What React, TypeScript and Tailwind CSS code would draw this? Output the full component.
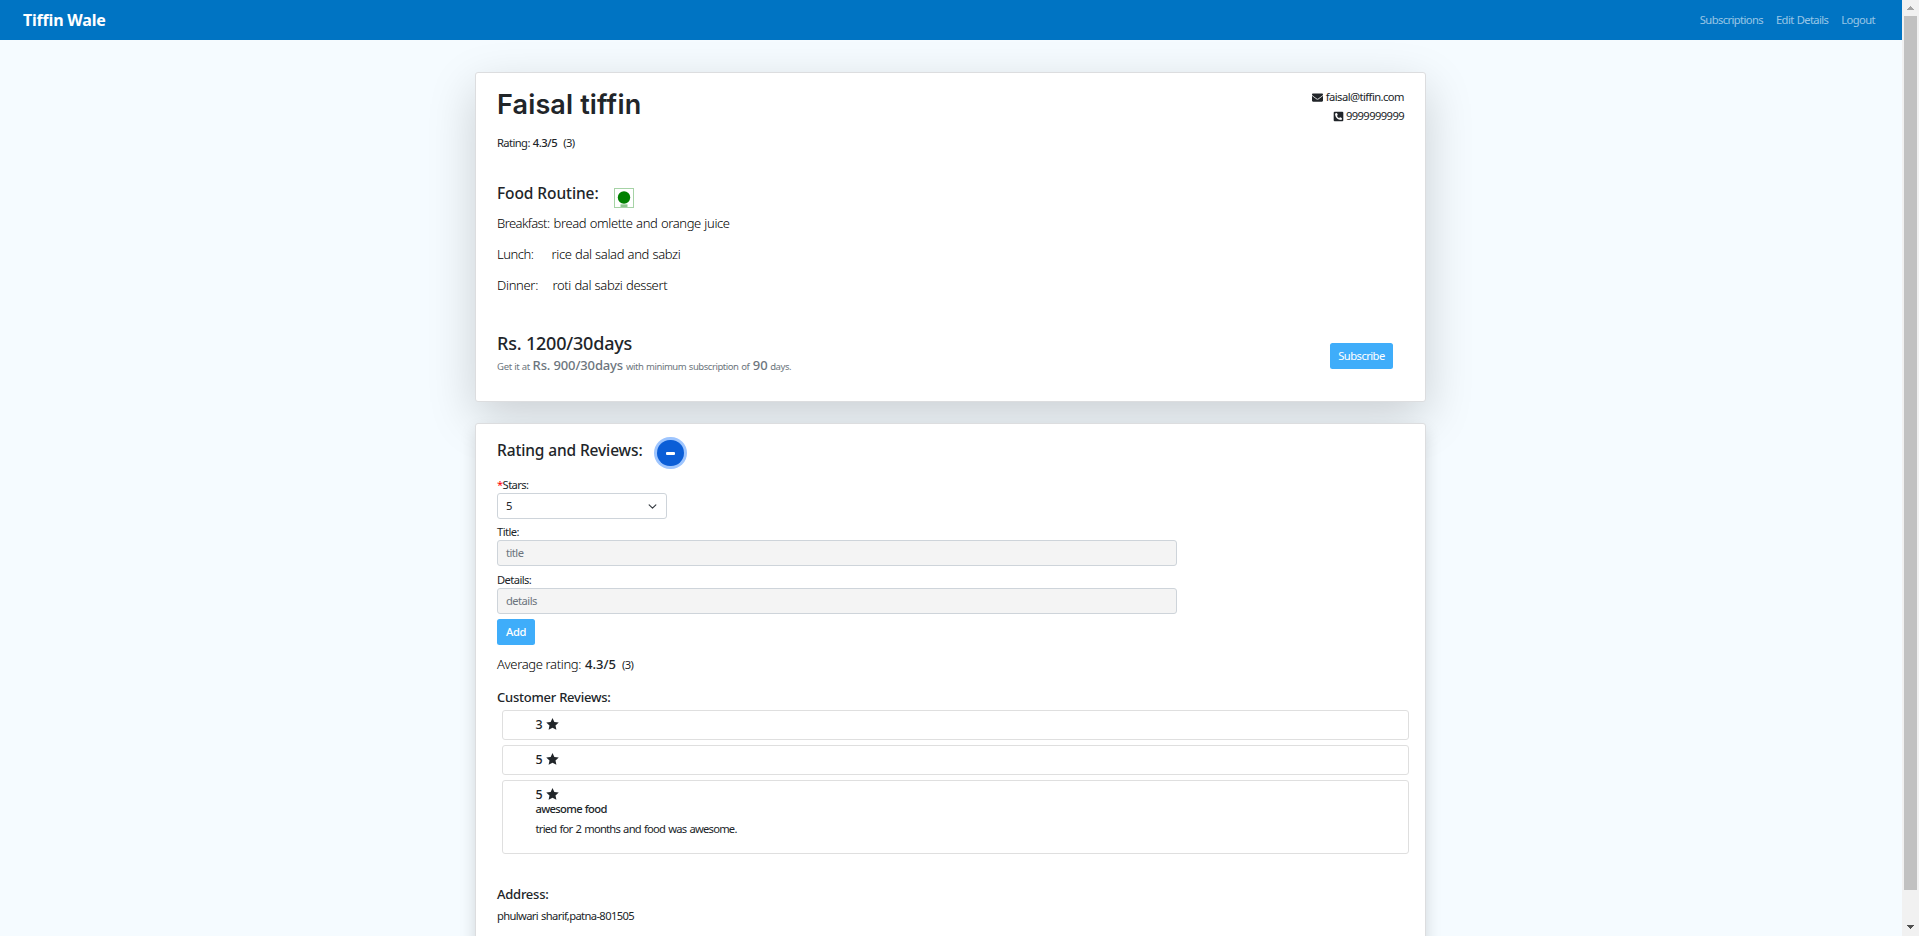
import { FaEnvelope, FaPhoneSquareAlt } from "react-icons/fa";

const body = "text-[11.2px] leading-4 tracking-[-0.59px]";
const field =
  "h-[26px] rounded-[3px] border border-[#ced4da] px-2 flex items-center text-[11.2px] tracking-[-0.55px]";

function Navbar() {
  return (
    <nav className="flex h-10 shrink-0 items-center justify-between bg-[#0074c3] pl-[23px] pr-[27px] text-white">
      <span className="text-[16px] font-bold leading-5 tracking-[-0.2px]">Tiffin Wale</span>
      <div className="flex gap-[13px] text-[11.2px] leading-4 tracking-[-0.6px] text-white/60">
        <a>Subscriptions</a>
        <a className="[word-spacing:0.7px]">Edit Details</a>
        <a>Logout</a>
      </div>
    </nav>
  );
}

function VegMark() {
  return (
    <svg className="size-5" viewBox="0 0 20 20">
      <rect x="0.5" y="0.5" width="19" height="19" fill="#fff" stroke="#a6d3a6" />
      <circle cx="10" cy="9.5" r="6.2" fill="#008000" />
      <path d="M6.500 16h7v1h-7z" fill="#b5dab5" />
      <path d="M6.500 17h7v2h-7z" fill="#8fc68f" />
    </svg>
  );
}

function Star() {
  return (
    <svg className="-mt-[2px] h-3 w-[13px]" viewBox="0 0 26 24" fill="currentColor">
      <path d="M13 0l3.700 8.100 8.800.9-6.500 6 1.800 8.700L13 19.300l-7.800 4.400L7 15 .5 9l8.800-.9z" />
    </svg>
  );
}

function Meal({ label, gap, text, top, track }: { label: string; gap: string; text: string; top: string; track: string }) {
  return (
    <div className={"flex h-[18px] text-[13px] font-light leading-[18px] text-black " + top + " " + gap}>
      <span className={track}>{label}</span>
      <span className="tracking-[-0.38px] [word-spacing:0.5px]">{text}</span>
    </div>
  );
}

function PlanCard() {
  return (
    <section className="flex h-[330px] w-[951px] shrink-0 justify-between rounded-[3px] border border-[#dcdddf] bg-white pl-[21px] pr-[21px] shadow-[0_16px_48px_rgba(0,0,0,0.175)]">
      <div>
        <h1 className="mt-[15px] h-[34px] font-[Inter,sans-serif] text-[27px] font-semibold leading-[34px] tracking-[0.15px]">
          Faisal tiffin
        </h1>
        <div className={"mt-[13px] flex " + body}>
          <span>Rating:</span>
          <span className="ml-[3px] font-medium tracking-[-0.45px]">4.3/5</span>
          <span className="ml-[6px]">(3)</span>
        </div>
        <div className="mt-[31px] flex h-[22px]">
          <h2 className="w-[117px] text-[15.5px] font-medium leading-[22px] tracking-[-0.09px]">Food Routine:</h2>
          <div className="mt-[6px]">
            <VegMark />
          </div>
        </div>
        <Meal top="mt-[10px]" gap="gap-[4px]" label="Breakfast:" text="bread omlette and orange juice" track="tracking-[-0.58px]" />
        <Meal top="mt-[13px]" gap="gap-[18px]" label="Lunch:" text="rice dal salad and sabzi" track="tracking-[-0.47px]" />
        <Meal top="mt-[13px]" gap="gap-[14.500px]" label="Dinner:" text="roti dal sabzi dessert" track="tracking-[-0.32px]" />
        <div className="mt-[37px] h-6 text-[18px] font-medium leading-6 tracking-[-0.2px]">Rs. 1200/30days</div>
        <div className="mt-px flex h-[18px] items-baseline text-[9.5px] leading-[18px] text-[#6c757d]">
          <span className="tracking-[-0.25px]">Get it at</span>
          <span className="ml-[2.500px] text-[13px] font-medium tracking-[-0.13px]">Rs. 900/30days</span>
          <span className="ml-[3px] tracking-[-0.45px] [word-spacing:0.6px]">with minimum subscription of</span>
          <span className="ml-[3.500px] text-[13px] font-medium">90</span>
          <span className="ml-[2.500px] tracking-[-0.42px]">days.</span>
        </div>
      </div>
      <div className="flex flex-col items-end">
        <div className="mt-4 flex items-center gap-[2.500px] text-[11.2px] leading-4 tracking-[-0.55px]">
          <FaEnvelope className="text-[11px]" />
          <span>faisal@tiffin.com</span>
        </div>
        <div className={"mt-[3px] flex items-center gap-[2px] " + body}>
          <FaPhoneSquareAlt className="text-[11px]" />
          <span>9999999999</span>
        </div>
        <button className="mr-[11px] mt-[219px] h-[26px] w-[63px] rounded-[2.5px] bg-[#3fadfa] text-[11.2px] leading-4 tracking-[-0.55px] text-white">
          Subscribe
        </button>
      </div>
    </section>
  );
}

function Review({ stars, title, text }: { stars: number; title?: string; text?: string }) {
  return (
    <div className={"rounded-[3px] border border-[#dfdfdf] pl-[32.5px] " + (text ? "h-[74px]" : "h-[30px]")}>
      <div className="mt-[5px] flex h-[18px] items-center gap-[3px] text-[12.5px] font-medium leading-[18px]">
        <span>{stars}</span>
        <Star />
      </div>
      {title && <div className="-mt-[3px] text-[11.2px] font-medium leading-4 tracking-[-0.68px] [word-spacing:0.7px]">{title}</div>}
      {text && <div className="mt-[4px] text-[11.2px] leading-4 tracking-[-0.76px] [word-spacing:0.9px]">{text}</div>}
    </div>
  );
}

function ReviewsCard() {
  return (
    <section className="mt-[21px] h-[560px] w-[951px] shrink-0 rounded-[3px] border border-[#dcdddf] bg-white px-[21px] shadow-[0_8px_16px_rgba(0,0,0,0.15)]">
      <div className="mt-[15px] flex h-[26px]">
        <h2 className="w-[160px] text-[15.5px] font-medium leading-[22px] tracking-[-0.13px]">Rating and Reviews:</h2>
        <button className="mt-px flex h-[26px] w-[27px] items-center justify-center rounded-full bg-[#0b5ed7] shadow-[0_0_0_3px_#9ec5fe]">
          <span className="h-[3px] w-[9px] rounded-[1px] bg-white" />
        </button>
      </div>
      <div className={"mt-[12px] " + body}>
        <span className="text-[#ff0000]">*</span>Stars:
      </div>
      <div className={"w-[170px] justify-between " + field}>
        <span>5</span>
        <svg className="mr-px size-[9px]" viewBox="0 0 16 16" fill="none" stroke="#343a40" strokeWidth="2" strokeLinecap="round" strokeLinejoin="round">
          <path d="m2 5 6 6 6-6" />
        </svg>
      </div>
      <div className={"mt-[5px] " + body}>Title:</div>
      <div className={"w-[680px] bg-[#f4f4f4] text-[#6c757d] " + field}>title</div>
      <div className={"mt-[6px] " + body}>Details:</div>
      <div className={"w-[680px] bg-[#f4f4f4] text-[#6c757d] " + field}>details</div>
      <button className="mt-[5px] block h-[26px] w-[38px] rounded-[2.5px] bg-[#3fadfa] text-[11.2px] font-medium leading-4 tracking-[-0.4px] text-white">
        Add
      </button>
      <div className="mt-[10px] flex h-[18px] items-baseline leading-[18px]">
        <span className="text-[13px] font-light tracking-[-0.35px] text-black">Average rating:</span>
        <span className="ml-[4px] text-[13px] font-medium">4.3/5</span>
        <span className="ml-[6px] text-[11.2px] tracking-[-0.55px]">(3)</span>
      </div>
      <h3 className="mt-[15px] text-[13px] font-medium leading-[18px] tracking-[-0.24px]">Customer Reviews:</h3>
      <div className="ml-[5px] mt-[4px] flex w-[907px] flex-col gap-[5px]">
        <Review stars={3} />
        <Review stars={5} />
        <Review stars={5} title="awesome food" text="tried for 2 months and food was awesome." />
      </div>
      <h3 className="mt-[31px] text-[13px] font-medium leading-[18px] tracking-[-0.25px]">Address:</h3>
      <div className="mt-[5px] text-[11.2px] leading-4 tracking-[-0.64px] [word-spacing:0.7px]">phulwari sharif,patna-801505</div>
    </section>
  );
}

function Scrollbar() {
  return (
    <div className="flex w-[17px] flex-col items-center bg-[#f1f1f1]">
      <svg className="h-4 w-[17px]" viewBox="0 0 17 16" fill="#a3a3a3" shapeRendering="crispEdges">
        <path d="M5 10h7L8.5 6z" />
      </svg>
      <div className="h-[874px] w-[13px] bg-[#c1c1c1]" />
      <svg className="mt-[29px] h-[17px] w-[17px]" viewBox="0 0 17 17" fill="#505050" shapeRendering="crispEdges">
        <path d="M5 6h7l-3.500 4z" />
      </svg>
    </div>
  );
}

export default function App() {
  return (
    <div className="flex h-[936px] w-full overflow-hidden bg-[#f5fbff] font-['Noto_Sans',sans-serif] text-[#212529]">
      <main className="flex h-full w-[1902px] flex-col overflow-hidden">
        <Navbar />
        <div className="flex flex-1 flex-col pl-[475px] pt-8">
          <PlanCard />
          <ReviewsCard />
        </div>
      </main>
      <Scrollbar />
    </div>
  );
}
